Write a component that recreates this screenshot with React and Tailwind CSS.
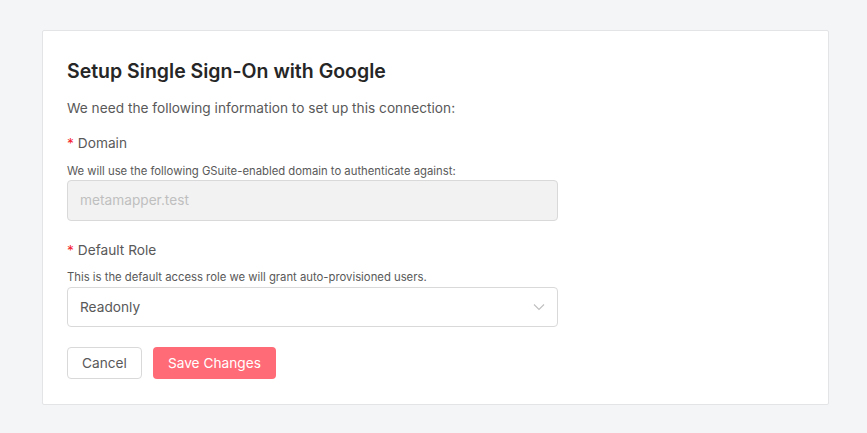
export default function App() {
  return (
    <div className="min-h-[433px] w-full bg-[#f4f5f7] pt-[30px] pl-[42px] pr-[38px] pb-[29px]" style={{ fontFamily: "Inter, 'Noto Sans', sans-serif" }}>
      <div className="bg-white border border-[#e3e4e6] rounded-[2px] px-[24px] pt-[27px] pb-[25px]">
        <h1 className="text-[19.5px] leading-[26px] font-semibold text-[#262626]">Setup Single Sign-On with Google</h1>
        <p className="mt-[13px] text-[13.7px] leading-[22px] text-[#595959]">We need the following information to set up this connection:</p>

        <div className="mt-[13px]">
          <div className="text-[13.7px] leading-[22px] text-[#595959]"><span className="text-[#f5222d] mr-[4px]">*</span>Domain</div>
          <div className="mt-[10px] text-[11.3px] leading-[14px] text-[#595959]">We will use the following GSuite-enabled domain to authenticate against:</div>
          <div className="mt-[2px] w-[491px] h-[41px] rounded-[4px] border border-[#d9d9d9] bg-[#f2f2f2] flex items-center px-[12px] text-[13.7px] text-[#bfbfbf]">metamapper.test</div>
        </div>

        <div className="mt-[18px]">
          <div className="text-[13.7px] leading-[22px] text-[#595959]"><span className="text-[#f5222d] mr-[4px]">*</span>Default Role</div>
          <div className="mt-[9px] text-[11.3px] leading-[14px] text-[#595959]">This is the default access role we will grant auto-provisioned users.</div>
          <div className="mt-[3px] w-[491px] h-[40px] rounded-[4px] border border-[#d9d9d9] bg-white flex items-center justify-between px-[12px] text-[13.7px] text-[#595959]">
            <span>Readonly</span>
            <svg width="12" height="12" viewBox="0 0 12 12" fill="none" stroke="#bfbfbf" strokeWidth="1.1"><path d="M1 3.5 L6 8.5 L11 3.5" /></svg>
          </div>
        </div>

        <div className="mt-[20px] flex gap-[11px]">
          <button className="h-[32px] px-[14px] rounded-[4px] border border-[#d9d9d9] bg-white text-[13.7px] text-[#595959]">Cancel</button>
          <button className="h-[32px] px-[15px] rounded-[4px] bg-[#ff6b77] text-[13.7px] text-white">Save Changes</button>
        </div>
      </div>
    </div>
  );
}
